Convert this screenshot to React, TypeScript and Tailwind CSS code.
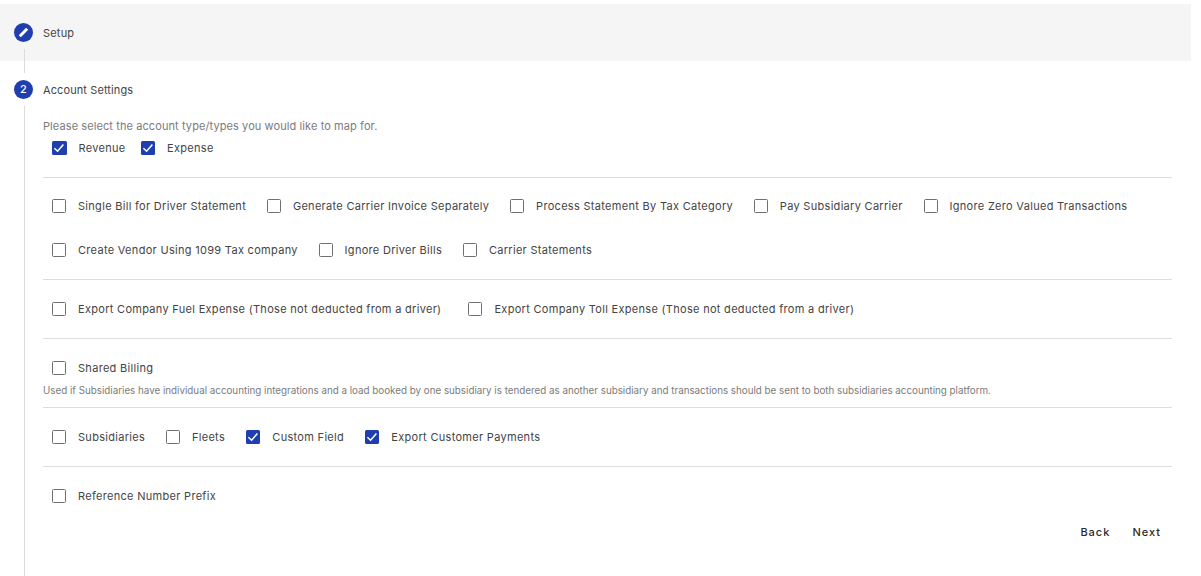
import React from 'react';

type Option = { label: string; checked?: boolean };

const Check: React.FC<Option> = ({ label, checked }) => (
  <label className="flex items-center gap-3 text-[11px] tracking-[0.3px] text-[#444444]">
    {checked ? (
      <span className="flex h-[14px] w-[14.5px] items-center justify-center rounded-[1.5px] bg-[#1f3fae]">
        <svg viewBox="0 0 14 14" className="h-[14px] w-[14px]" fill="none" stroke="#fff" strokeWidth="1.5">
          <path d="M2.4 7.2 5.6 10.2 11.4 3.6" />
        </svg>
      </span>
    ) : (
      <span className="h-[14px] w-[14px] rounded-[1.5px] border border-[#6f6f6f] bg-white" />
    )}
    <span>{label}</span>
  </label>
);

const Row: React.FC<{ options: Option[]; wide?: boolean }> = ({ options, wide }) => (
  <div className={`flex h-[44px] items-center pl-[9px] ${wide ? 'gap-[27px]' : 'gap-[20.8px]'}`}>
    {options.map((o) => (
      <Check key={o.label} {...o} />
    ))}
  </div>
);

const Group: React.FC<{ children: React.ReactNode }> = ({ children }) => (
  <div className="border-b border-[#dedede] py-[7px]">{children}</div>
);

export default function App() {
  return (
    <div className="h-[576px] w-[1191px] overflow-hidden bg-white pt-1 font-['Inter',sans-serif]">
      {/* Setup step */}
      <div className="flex h-[57px] bg-[#f5f5f5] pl-[14px]">
        <div className="flex w-[29px] flex-col pt-[19px]">
          <span className="flex h-[19px] w-[19px] items-center justify-center rounded-full bg-[#1f3fae]">
            <svg viewBox="0 0 19 19" className="h-[19px] w-[19px]" fill="none" stroke="#fff" strokeWidth="3">
              <path d="M5.8 13.2 13.2 5.8" />
            </svg>
          </span>
          <span className="ml-[9.5px] mt-[7px] w-px flex-1 bg-[#dcdcdc]" />
        </div>
        <span className="self-center pt-[1px] text-[11px] tracking-[0.2px] text-[#444444]">Setup</span>
      </div>

      <div className="flex h-[515px] pl-[14px]">
        {/* rail */}
        <div className="flex w-[29px] flex-col">
          <span className="ml-[9.5px] h-[12px] w-px bg-[#dcdcdc]" />
          <span className="my-[7px] flex h-[19px] w-[19px] items-center justify-center rounded-full bg-[#1f3fae] text-[11px] font-medium text-white">
            2
          </span>
          <span className="ml-[9.5px] w-px flex-1 bg-[#dcdcdc]" />
        </div>

        <div className="w-[1129px]">
          <div className="flex h-[57px] items-center pt-[1px] text-[11px] tracking-[0.1px] text-[#444444]">
            Account Settings
          </div>

          <div className="border-b border-[#dedede] pb-[15px] pt-[1px]">
            <p className="h-[14px] text-[11px] leading-[14px] tracking-[0.09px] text-[#7b7b7b]">
              Please select the account type/types you would like to map for.
            </p>
            <div className="mt-[1px] flex h-[28px] items-center gap-[15px] pl-[9px]">
              <Check label="Revenue" checked />
              <Check label="Expense" checked />
            </div>
          </div>

          <div className="border-b border-[#dedede] pb-[7px] pt-[6px]">
            <Row
              options={[
                { label: 'Single Bill for Driver Statement' },
                { label: 'Generate Carrier Invoice Separately' },
                { label: 'Process Statement By Tax Category' },
                { label: 'Pay Subsidiary Carrier' },
                { label: 'Ignore Zero Valued Transactions' },
              ]}
            />
            <Row
              options={[
                { label: 'Create Vendor Using 1099 Tax company' },
                { label: 'Ignore Driver Bills' },
                { label: 'Carrier Statements' },
              ]}
            />
          </div>

          <Group>
            <Row
              wide
              options={[
                { label: 'Export Company Fuel Expense (Those not deducted from a driver)' },
                { label: 'Export Company Toll Expense (Those not deducted from a driver)' },
              ]}
            />
          </Group>

          <div className="border-b border-[#dedede] pb-[11px] pt-[7px]">
            <Row options={[{ label: 'Shared Billing' }]} />
            <p className="-mt-[6px] h-[12px] text-[9.81px] leading-[12px] text-[#7b7b7b]">
              Used if Subsidiaries have individual accounting integrations and a load booked by one subsidiary is
              tendered as another subsidiary and transactions should be sent to both subsidiaries accounting platform.
            </p>
          </div>

          <Group>
            <Row
              options={[
                { label: 'Subsidiaries' },
                { label: 'Fleets' },
                { label: 'Custom Field', checked: true },
                { label: 'Export Customer Payments', checked: true },
              ]}
            />
          </Group>

          <div className="py-[7px]">
            <Row options={[{ label: 'Reference Number Prefix' }]} />
          </div>

          <div className="-mt-[1px] flex justify-end gap-[22px] pr-[11px]">
            <button className="text-[11px] font-medium tracking-[1px] text-[#2b2b2b]">Back</button>
            <button className="text-[11px] font-medium tracking-[1px] text-[#2b2b2b]">Next</button>
          </div>
        </div>
      </div>
    </div>
  );
}
